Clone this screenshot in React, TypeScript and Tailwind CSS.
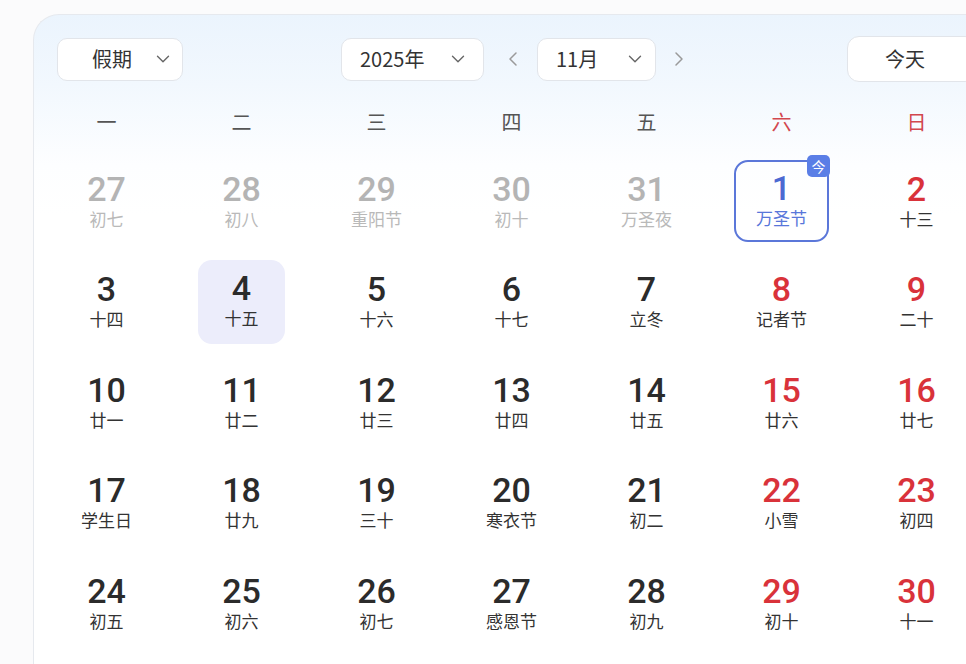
import { ChevronDown, ChevronLeft, ChevronRight } from 'lucide-react';

type Day = {
  n: number;
  lunar: string;
  muted?: boolean;
  red?: boolean;
  today?: boolean;
  selected?: boolean;
};

const weekdays = ['一', '二', '三', '四', '五', '六', '日'];

const days: Day[] = [
  { n: 27, lunar: '初七', muted: true },
  { n: 28, lunar: '初八', muted: true },
  { n: 29, lunar: '重阳节', muted: true },
  { n: 30, lunar: '初十', muted: true },
  { n: 31, lunar: '万圣夜', muted: true },
  { n: 1, lunar: '万圣节', today: true },
  { n: 2, lunar: '十三', red: true },
  { n: 3, lunar: '十四' },
  { n: 4, lunar: '十五', selected: true },
  { n: 5, lunar: '十六' },
  { n: 6, lunar: '十七' },
  { n: 7, lunar: '立冬' },
  { n: 8, lunar: '记者节', red: true },
  { n: 9, lunar: '二十', red: true },
  { n: 10, lunar: '廿一' },
  { n: 11, lunar: '廿二' },
  { n: 12, lunar: '廿三' },
  { n: 13, lunar: '廿四' },
  { n: 14, lunar: '廿五' },
  { n: 15, lunar: '廿六', red: true },
  { n: 16, lunar: '廿七', red: true },
  { n: 17, lunar: '学生日' },
  { n: 18, lunar: '廿九' },
  { n: 19, lunar: '三十' },
  { n: 20, lunar: '寒衣节' },
  { n: 21, lunar: '初二' },
  { n: 22, lunar: '小雪', red: true },
  { n: 23, lunar: '初四', red: true },
  { n: 24, lunar: '初五' },
  { n: 25, lunar: '初六' },
  { n: 26, lunar: '初七' },
  { n: 27, lunar: '感恩节' },
  { n: 28, lunar: '初九' },
  { n: 29, lunar: '初十', red: true },
  { n: 30, lunar: '十一', red: true },
];

function DayCell({ day }: { day: Day }) {
  const numColor = day.muted
    ? 'text-[#b4b4b4]'
    : day.today
      ? 'text-[#4c69d2]'
      : day.red
        ? 'text-[#d9323a]'
        : 'text-[#2b2b2b]';
  const lunarColor = day.muted
    ? 'text-[#b9b9b9]'
    : day.today
      ? 'text-[#5876da]'
      : 'text-[#333333]';

  const content = (
    <>
      <div className={`font-['Roboto',sans-serif] font-medium text-[34px] leading-[32px] ${numColor}`}>
        {day.n}
      </div>
      <div className={`mt-[3px] text-[17px] leading-[22px] ${lunarColor}`}>{day.lunar}</div>
    </>
  );

  return (
    <div className="flex items-center justify-center">
      {day.today ? (
        <div className="relative flex h-[82px] w-[95px] flex-col items-center justify-center rounded-[14px] border-2 border-[#5b77d9] pb-[2px]">
          {content}
          <span className="absolute -right-[3px] -top-[7px] flex h-[22px] w-[23px] items-center justify-center rounded-[5px] bg-[#5a7ee6] text-[14px] leading-none text-white">
            今
          </span>
        </div>
      ) : day.selected ? (
        <div className="flex h-[84px] w-[87px] flex-col items-center justify-center rounded-[14px] bg-[#ecedfb] pb-[2px]">
          {content}
        </div>
      ) : (
        <div className="flex flex-col items-center">{content}</div>
      )}
    </div>
  );
}

function Select({ label, width, textPad, chevPad }: { label: string; width: string; textPad: string; chevPad: string }) {
  return (
    <button className={`flex h-[43px] ${width} items-center rounded-[10px] border border-[#e2e5ea] bg-white`}>
      <span className={`${textPad} text-[20px] text-[#333]`}>{label}</span>
      <ChevronDown className={`${chevPad} h-[22px] w-[22px] text-[#666]`} strokeWidth={1.5} />
    </button>
  );
}

export default function App() {
  return (
    <div className="h-[664px] w-[966px] overflow-hidden bg-[#fbfbfc] pl-[33px] pt-[14px] font-['Noto_Sans_CJK_SC','Noto_Sans',sans-serif]">
      <div className="h-[700px] w-[980px] rounded-tl-[26px] border-l border-t border-[#e6e9ee] bg-[linear-gradient(180deg,#ebf4fd_0px,#f2f8fe_70px,#fdfeff_150px,#ffffff_200px)]">
        {/* Toolbar */}
        <div className="flex items-center pl-[23px] pt-[21px]">
          <Select label="假期" width="w-[126px]" textPad="pl-[34px]" chevPad="ml-[20px]" />
          <div className="ml-[158px] flex items-center">
            <Select label="2025年" width="w-[143px]" textPad="pl-[18px]" chevPad="ml-[23px]" />
            <ChevronLeft className="ml-[17px] h-[24px] w-[24px] text-[#9a9a9a]" strokeWidth={1.5} />
            <div className="ml-[12px]">
              <Select label="11月" width="w-[119px]" textPad="pl-[18px]" chevPad="ml-[26px]" />
            </div>
            <ChevronRight className="ml-[11px] h-[24px] w-[24px] text-[#9a9a9a]" strokeWidth={1.5} />
          </div>
          <button className="ml-[156px] flex h-[46px] w-[130px] items-center rounded-[12px] border border-[#e2e5ea] bg-white pl-[37px] text-[20px] text-[#333]">
            今天
          </button>
        </div>

        {/* Weekdays */}
        <div className="ml-[5px] mt-[17px] grid h-[46px] grid-cols-[repeat(7,135px)] items-center">
          {weekdays.map((w, i) => (
            <div key={w} className={`text-center text-[20px] ${i >= 5 ? 'text-[#d2474e]' : 'text-[#555]'}`}>
              {w}
            </div>
          ))}
        </div>

        {/* Days */}
        <div className="ml-[5px] mt-[6px] grid grid-cols-[repeat(7,135px)] auto-rows-[100.5px]">
          {days.map((d, i) => (
            <DayCell key={i} day={d} />
          ))}
        </div>
      </div>
    </div>
  );
}
